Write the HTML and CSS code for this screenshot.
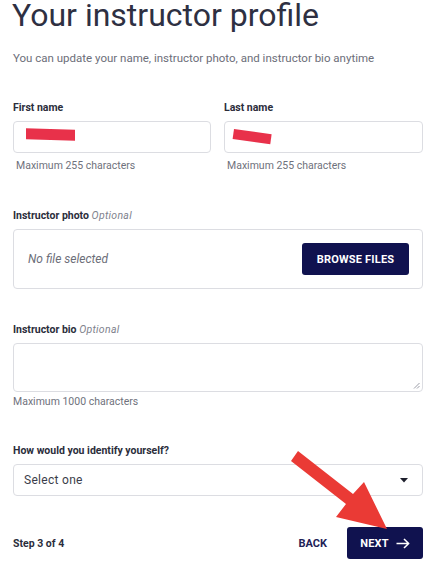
FILE: index.html
```html
<!DOCTYPE html>
<html lang="en">
<head>
<meta charset="utf-8">
<title>Your instructor profile</title>
<link rel="stylesheet" href="styles.css">
</head>
<body>
<main class="page">
  <h1 class="title">Your instructor profile</h1>
  <p class="subtitle">You can update your name, instructor photo, and instructor bio anytime</p>

  <div class="row">
    <div class="field">
      <label class="label">First name</label>
      <div class="input"><span class="redact redact-a"></span></div>
      <div class="help">Maximum 255 characters</div>
    </div>
    <div class="field">
      <label class="label">Last name</label>
      <div class="input"><span class="redact redact-b"></span></div>
      <div class="help">Maximum 255 characters</div>
    </div>
  </div>

  <div class="field photo">
    <label class="label">Instructor photo <em class="opt">Optional</em></label>
    <div class="filebox">
      <span class="nofile">No file selected</span>
      <button class="btn browse">BROWSE FILES</button>
    </div>
  </div>

  <div class="field bio">
    <label class="label">Instructor bio <em class="opt">Optional</em></label>
    <div class="textarea">
      <svg class="grip" width="7" height="7" viewBox="0 0 7 7"><path d="M6.5 1 L1 6.5 M6.5 4 L4 6.5" stroke="#9a9ca6" stroke-width="1"/></svg>
    </div>
    <div class="help tight">Maximum 1000 characters</div>
  </div>

  <div class="field identify">
    <label class="label">How would you identify yourself?</label>
    <div class="select">
      <span>Select one</span>
      <svg width="8" height="5" viewBox="0 0 8 5"><path d="M0 0 H8 L4 4.5 Z" fill="#1d1f2c"/></svg>
    </div>
  </div>

  <footer class="footer">
    <span class="step">Step 3 of 4</span>
    <div class="actions">
      <button class="back">BACK</button>
      <button class="btn next">NEXT
        <svg width="14" height="11" viewBox="0 0 14 11"><path d="M0.5 5.5 H12.5 M8 1 L12.7 5.5 L8 10" fill="none" stroke="#fff" stroke-width="1.6" stroke-linejoin="round"/></svg>
      </button>
    </div>
  </footer>
</main>

<svg class="annot" width="434" height="566" viewBox="0 0 434 566">
  <path d="M291 461 L298 451 L353 494 L364 482 L387 529 L336 517 L346 504 Z" fill="#ea3a35"/>
</svg>
</body>
</html>
```

FILE: styles.css
```css
* { box-sizing: border-box; }
html, body { margin: 0; padding: 0; background: #fff; }
body {
  font-family: Roboto, "Liberation Sans", sans-serif;
  color: #2b2d3b;
  width: 434px;
  height: 566px;
  overflow: hidden;
  position: relative;
}
.page { padding: 0 11px 0 13px; }
.title {
  margin: 0 0 0 -1px;
  font-size: 32px;
  font-weight: 400;
  line-height: 30px;
  color: #2e3042;
  letter-spacing: 0;
}
.subtitle {
  margin: 21px 0 0;
  font-size: 11.5px;
  line-height: 14px;
  color: #6c6e79;
}
.row {
  display: grid;
  grid-template-columns: 198px 199px;
  column-gap: 13px;
  margin-top: 36px;
}
.field { display: flex; flex-direction: column; }
.label {
  font-size: 10.5px;
  font-weight: 700;
  line-height: 13px;
  color: #2b2d3b;
  margin-bottom: 7px;
}
.opt { font-style: italic; font-weight: 400; color: #80828d; letter-spacing: 0.3px; }
.input {
  height: 32px;
  border: 1px solid #dcdde2;
  border-radius: 4px;
  position: relative;
}
.help {
  font-size: 10.5px;
  line-height: 13px;
  color: #6f717c;
  margin: 6px 0 0 3px;
}
.help.tight { margin: 3px 0 0 0; }
.redact { position: absolute; background: #e8314a; }
.redact-a { left: 12px; top: 7px; width: 49px; height: 11px; transform: skewY(2deg); }
.redact-b { left: 9px; top: 7px; width: 38px; height: 10px; transform: rotate(8deg); transform-origin: left top; }
.photo { margin-top: 37px; }
.filebox {
  height: 60px;
  border: 1px solid #dcdde2;
  border-radius: 4px;
  display: flex;
  align-items: center;
  justify-content: space-between;
  padding: 0 13px 0 14px;
}
.nofile { font-size: 12px; font-style: italic; color: #6c6e79; }
.btn {
  border: 0;
  border-radius: 3px;
  background: #10124f;
  color: #fff;
  font-family: inherit;
  font-weight: 700;
  font-size: 11px;
  letter-spacing: 0.2px;
  height: 32px;
  cursor: pointer;
}
.browse { width: 107px; }
.bio { margin-top: 34px; }
.textarea {
  height: 49px;
  border: 1px solid #dcdde2;
  border-radius: 4px;
  position: relative;
}
.grip { position: absolute; right: 2px; bottom: 2px; }
.identify { margin-top: 36px; }
.select {
  height: 32px;
  border: 1px solid #dcdde2;
  border-radius: 4px;
  display: flex;
  align-items: center;
  justify-content: space-between;
  padding: 0 14px 0 10px;
  font-size: 12px;
  color: #3b3d4a;
  letter-spacing: 0.3px;
}
.footer {
  margin-top: 31px;
  display: flex;
  align-items: center;
  justify-content: space-between;
}
.step { font-size: 10.5px; font-weight: 700; color: #2b2d3b; }
.actions { display: flex; align-items: center; gap: 20px; }
.back {
  border: 0;
  background: none;
  font-family: inherit;
  font-weight: 700;
  font-size: 11px;
  color: #1f2257;
  padding: 0;
}
.next {
  width: 76px;
  display: flex;
  align-items: center;
  justify-content: center;
  gap: 7px;
}
.annot { position: absolute; left: 0; top: 0; pointer-events: none; }
```
